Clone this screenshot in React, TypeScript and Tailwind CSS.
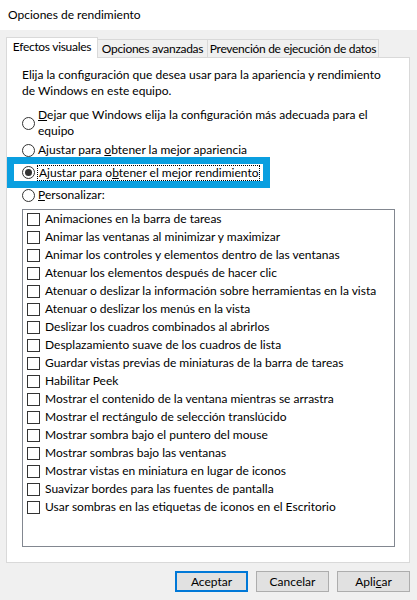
import React from "react";

const items = [
  "Animaciones en la barra de tareas",
  "Animar las ventanas al minimizar y maximizar",
  "Animar los controles y elementos dentro de las ventanas",
  "Atenuar los elementos después de hacer clic",
  "Atenuar o deslizar la información sobre herramientas en la vista",
  "Atenuar o deslizar los menús en la vista",
  "Deslizar los cuadros combinados al abrirlos",
  "Desplazamiento suave de los cuadros de lista",
  "Guardar vistas previas de miniaturas de la barra de tareas",
  "Habilitar Peek",
  "Mostrar el contenido de la ventana mientras se arrastra",
  "Mostrar el rectángulo de selección translúcido",
  "Mostrar sombra bajo el puntero del mouse",
  "Mostrar sombras bajo las ventanas",
  "Mostrar vistas en miniatura en lugar de iconos",
  "Suavizar bordes para las fuentes de pantalla",
  "Usar sombras en las etiquetas de iconos en el Escritorio",
];

function Radio({ checked = false }: { checked?: boolean }) {
  return (
    <span className="w-[13px] h-[13px] shrink-0 rounded-full border border-[#333333] bg-white flex items-center justify-center">
      {checked && <span className="w-[7px] h-[7px] rounded-full bg-[#333333]" />}
    </span>
  );
}

export default function App() {
  return (
    <div
      className="w-[417px] h-[600px] bg-[#f0f0f0] flex flex-col text-black text-[12px] leading-[16px] whitespace-nowrap"
      style={{ fontFamily: 'Lato, "Noto Sans", sans-serif' }}
    >
      <div className="h-[30px] bg-white flex items-center pl-[8px] text-[12px]">Opciones de rendimiento</div>

      <div className="pl-[6px] pt-[7px] flex flex-col">
        {/* tabs */}
        <div className="flex items-end h-[20px] tracking-[-0.3px]">
          <div className="relative z-10 -mb-px h-[21px] w-[92px] bg-white border border-b-0 border-[#d9d9d9] flex items-start justify-center pt-[1px]">
            Efectos visuales
          </div>
          <div className="h-[18px] w-[110px] border-t border-r border-[#d9d9d9] flex items-center justify-center">
            Opciones avanzadas
          </div>
          <div className="h-[18px] w-[171px] border-t border-r border-[#d9d9d9] flex items-center justify-center">
            Prevención de ejecución de datos
          </div>
        </div>

        {/* panel */}
        <div className="w-[404px] h-[506px] bg-white border border-[#d9d9d9] flex flex-col pt-[9px]">
          <div className="pl-[15px] pr-[10px]">
            Elija la configuración que desea usar para la apariencia y rendimiento
            <br />
            de Windows en este equipo.
          </div>

          <div className="mt-[8px] flex items-center pl-[15px] gap-[3px]">
            <Radio />
            <span>
              <span className="underline">D</span>ejar que Windows elija la configuración más adecuada para el
              <br />
              equipo
            </span>
          </div>

          <div className="mt-[3px] flex items-center pl-[15px] gap-[3px] h-[16px]">
            <Radio />
            <span>
              Ajustar para <span className="underline">o</span>btener la mejor apariencia
            </span>
          </div>

          <div className="-mt-px w-[263px] h-[31px] border-[7px] border-[#0a9fe0] flex items-center pl-[8px] gap-[2px]">
            <Radio checked />
            <span className="border border-dotted border-black px-[1px] leading-[14px]">
              Ajustar para o<span className="underline">b</span>tener el mejor rendimiento
            </span>
          </div>

          <div className="-mt-px flex items-center pl-[15px] gap-[3px] h-[16px]">
            <Radio />
            <span>
              <span className="underline">P</span>ersonalizar:
            </span>
          </div>

          <div className="ml-[15px] mt-[6px] w-[373px] h-[338px] border border-[#828790] flex flex-col">
            {items.map((t) => (
              <div key={t} className="h-[18px] flex items-center pl-[4px] gap-[5px]">
                <span className="w-[13px] h-[13px] shrink-0 border border-[#333333] bg-white" />
                <span>{t}</span>
              </div>
            ))}
          </div>
        </div>
      </div>

      {/* buttons */}
      <div className="flex justify-end gap-[8px] pr-[7px] mt-[8px]">
        <div className="w-[73px] h-[21px] bg-[#e1e1e1] border-2 border-[#0078d7] flex items-center justify-center">
          Aceptar
        </div>
        <div className="w-[73px] h-[21px] bg-[#e1e1e1] border border-[#adadad] flex items-center justify-center">
          Cancelar
        </div>
        <div className="w-[73px] h-[21px] bg-[#e1e1e1] border border-[#adadad] flex items-center justify-center">
          <span>
            Apli<span className="underline">c</span>ar
          </span>
        </div>
      </div>
    </div>
  );
}
